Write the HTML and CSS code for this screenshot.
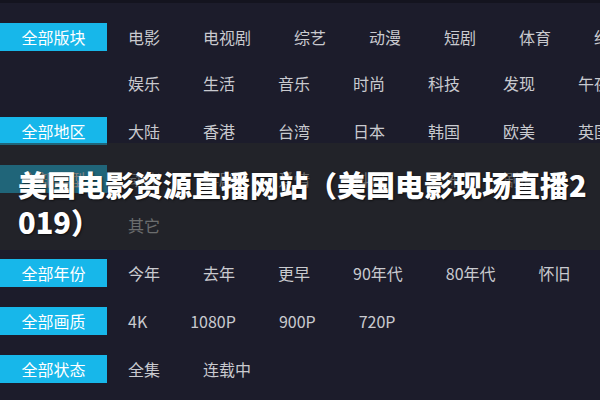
FILE: index.html
```html
<!DOCTYPE html>
<html lang="zh-CN">
<head>
<meta charset="utf-8">
<title>美国电影资源直播网站</title>
<link rel="stylesheet" href="styles.css">
</head>
<body>
<div class="page">
  <div class="filters">
    <div class="group">
      <div class="label">全部版块</div>
      <div class="items">
        <div class="row"><span>电影</span><span>电视剧</span><span>综艺</span><span>动漫</span><span>短剧</span><span>体育</span><span>纪录片</span></div>
        <div class="row"><span>娱乐</span><span>生活</span><span>音乐</span><span>时尚</span><span>科技</span><span>发现</span><span>午夜</span></div>
      </div>
    </div>
    <div class="group">
      <div class="label">全部地区</div>
      <div class="items">
        <div class="row"><span>大陆</span><span>香港</span><span>台湾</span><span>日本</span><span>韩国</span><span>欧美</span><span>英国</span></div>
      </div>
    </div>
    <div class="group">
      <div class="label">全部类型</div>
      <div class="items">
        <div class="row"><span>动作</span><span>喜剧</span><span>爱情</span><span>科幻</span><span>恐怖</span><span>剧情</span></div>
        <div class="row"><span>其它</span></div>
      </div>
    </div>
    <div class="group">
      <div class="label">全部年份</div>
      <div class="items">
        <div class="row"><span>今年</span><span>去年</span><span>更早</span><span>90年代</span><span>80年代</span><span>怀旧</span></div>
      </div>
    </div>
    <div class="group">
      <div class="label">全部画质</div>
      <div class="items">
        <div class="row"><span>4K</span><span>1080P</span><span>900P</span><span>720P</span></div>
      </div>
    </div>
    <div class="group">
      <div class="label">全部状态</div>
      <div class="items">
        <div class="row"><span>全集</span><span>连载中</span></div>
      </div>
    </div>
  </div>
  <div class="banner">
    <h1 class="title">美国电影资源直播网站（美国电影现场直播2019）</h1>
  </div>
</div>
</body>
</html>
```

FILE: styles.css
```css
html, body {
  margin: 0;
  padding: 0;
}

body {
  background: #1c1c2b;
  font-family: "Noto Sans CJK SC", "Noto Sans", sans-serif;
}

.page {
  position: relative;
  width: 600px;
  height: 400px;
  overflow: hidden;
  background: #1c1c2b;
  border-top: 3px solid #14141f;
  box-sizing: border-box;
}

.filters {
  display: flex;
  flex-direction: column;
  gap: 20px;
  padding-top: 20px;
}

.group {
  display: flex;
  align-items: flex-start;
}

.label {
  flex: none;
  width: 107px;
  height: 28px;
  line-height: 28px;
  background: #17b7ea;
  color: #ffffff;
  font-size: 16px;
  text-align: center;
}

.items {
  display: flex;
  flex-direction: column;
  gap: 18px;
  margin-left: 21px;
}

.row {
  display: flex;
  gap: 43px;
  height: 28px;
  align-items: center;
  white-space: nowrap;
  color: #c9cacf;
  font-size: 16px;
}

.banner {
  position: absolute;
  left: 0;
  right: 0;
  top: 140px;
  background: rgba(40, 42, 40, 0.58);
  padding: 23px 0 10px 18px;
}

.title {
  margin: 0;
  color: #ffffff;
  font-size: 29px;
  font-weight: 900;
  line-height: 37px;
  word-break: break-all;
  text-shadow: 1px 1px 2px rgba(0, 0, 0, 0.6);
}
```
